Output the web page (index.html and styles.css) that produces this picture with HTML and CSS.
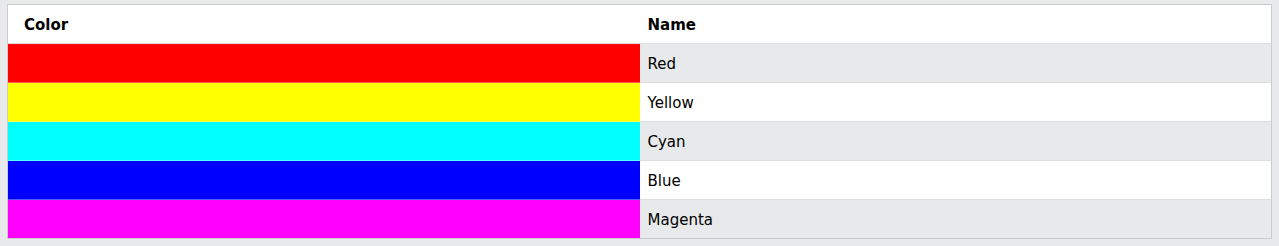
FILE: index.html
```html
<!DOCTYPE html>
<html>
<head>
<meta charset="utf-8">
<link rel="stylesheet" href="styles.css">
</head>
<body>
<table class="colors">
  <thead>
    <tr><th class="col-color">Color</th><th>Name</th></tr>
  </thead>
  <tbody>
    <tr><td class="swatch red"></td><td>Red</td></tr>
    <tr><td class="swatch yellow"></td><td>Yellow</td></tr>
    <tr><td class="swatch cyan"></td><td>Cyan</td></tr>
    <tr><td class="swatch blue"></td><td>Blue</td></tr>
    <tr><td class="swatch magenta"></td><td>Magenta</td></tr>
  </tbody>
</table>
</body>
</html>
```
FILE: styles.css
```css
html, body {
  margin: 0;
  background: #e7e9eb;
}
body {
  padding: 4px 7px;
  font-family: "DejaVu Sans", Verdana, sans-serif;
  font-size: 15px;
  line-height: 22px;
  color: #000;
}
.colors {
  width: 100%;
  border-collapse: separate;
  border-spacing: 0;
  border: 1px solid #ccc;
  table-layout: fixed;
}
.col-color {
  width: calc(50% - 2px);
}
.colors thead tr,
.colors tbody tr:nth-child(even) {
  background: #fff;
}
.colors tbody tr:nth-child(odd) {
  background: #e7e9eb;
}
.colors th,
.colors td {
  padding: 9px 8px 7px;
  border-bottom: 1px solid #ddd;
  text-align: left;
  vertical-align: top;
}
.colors td.swatch {
  border-bottom-color: rgba(255, 255, 255, 0.35);
}
.colors tbody tr:last-child td {
  border-bottom: none;
}
.colors th {
  font-weight: bold;
}
.colors th:first-child,
.colors td:first-child {
  padding-left: 16px;
}
.red { background: #ff0000; }
.yellow { background: #ffff00; }
.cyan { background: #00ffff; }
.blue { background: #0000ff; }
.magenta { background: #ff00ff; }
```
